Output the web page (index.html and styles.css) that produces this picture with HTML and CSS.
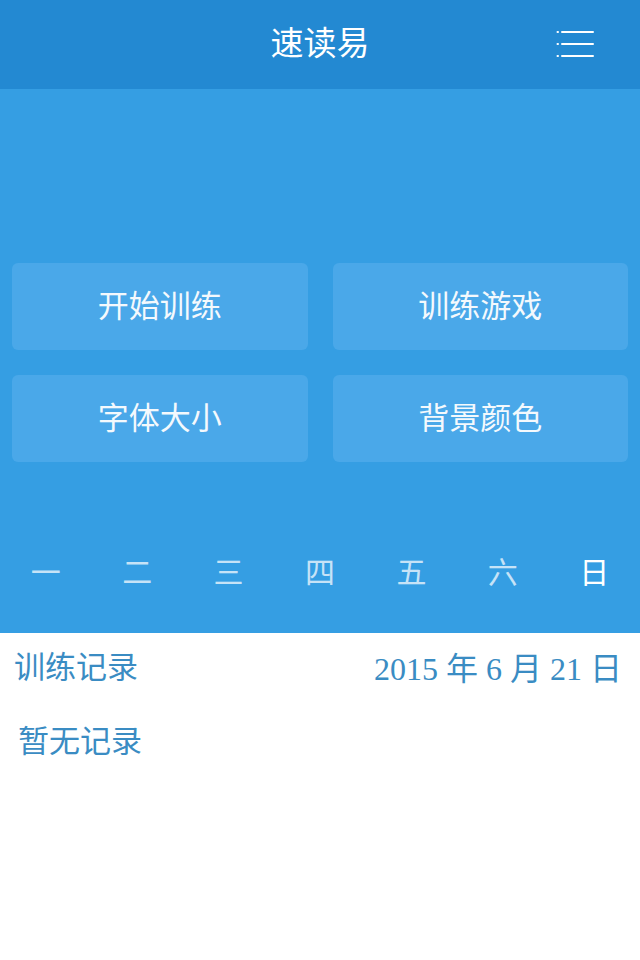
FILE: index.html
```html
<!DOCTYPE html>
<html lang="zh">
<head>
<meta charset="utf-8">
<link rel="stylesheet" href="styles.css">
</head>
<body>
<header class="topbar">
  <h1 class="title">速读易</h1>
  <button class="menu" aria-label="菜单">
    <svg width="40" height="30" viewBox="0 0 40 30">
      <g stroke="#ffffff" stroke-width="2" stroke-linecap="round">
        <line x1="1.5" y1="3" x2="2" y2="3"/>
        <line x1="6" y1="3" x2="37" y2="3"/>
        <line x1="1.5" y1="15" x2="2" y2="15"/>
        <line x1="6" y1="15" x2="37" y2="15"/>
        <line x1="1.5" y1="27" x2="2" y2="27"/>
        <line x1="6" y1="27" x2="37" y2="27"/>
      </g>
    </svg>
  </button>
</header>
<section class="panel">
  <div class="grid">
    <div class="tile">开始训练</div>
    <div class="tile">训练游戏</div>
    <div class="tile">字体大小</div>
    <div class="tile">背景颜色</div>
  </div>
  <ul class="week">
    <li>一</li>
    <li>二</li>
    <li>三</li>
    <li>四</li>
    <li>五</li>
    <li>六</li>
    <li class="today">日</li>
  </ul>
</section>
<section class="records">
  <div class="rec-head">
    <span class="rec-title">训练记录</span>
    <span class="rec-date">2015 年 6 月 21 日</span>
  </div>
  <p class="empty">暂无记录</p>
</section>
</body>
</html>
```
FILE: styles.css
```css
* { box-sizing: border-box; }
html, body {
  margin: 0;
  padding: 0;
  background: #ffffff;
  font-family: "Noto Sans CJK SC", "Noto Sans", sans-serif;
}
.topbar {
  height: 89px;
  background: #2389d2;
  display: flex;
  align-items: center;
  justify-content: center;
  position: relative;
}
.title {
  margin: 0 0 6px 0;
  color: #ffffff;
  font-size: 33px;
  font-weight: 400;
  line-height: 1;
}
.menu {
  position: absolute;
  right: 44px;
  top: 29px;
  width: 40px;
  height: 30px;
  padding: 0;
  border: 0;
  background: none;
  display: block;
}
.menu svg { display: block; }
.panel {
  background: #359ee3;
  height: 544px;
  padding: 174px 12px 0 12px;
}
.grid {
  display: grid;
  grid-template-columns: 1fr 1fr;
  column-gap: 25px;
  row-gap: 25px;
}
.tile {
  height: 87px;
  padding-bottom: 6px;
  background: #4aa8e9;
  border-radius: 6px;
  color: #f4f9fd;
  font-size: 31px;
  display: flex;
  align-items: center;
  justify-content: center;
}
.week {
  list-style: none;
  margin: 86px -12px 0 -12px;
  padding: 0;
  display: grid;
  grid-template-columns: repeat(7, 1fr);
}
.week li {
  text-align: center;
  font-size: 30px;
  line-height: 44px;
  color: rgba(255, 255, 255, 0.72);
}
.week li.today { color: #ffffff; }
.records {
  padding: 0 18px 0 14px;
}
.rec-head {
  display: flex;
  justify-content: space-between;
  align-items: center;
  height: 66px;
}
.rec-title {
  color: #3a8cc3;
  font-size: 31px;
  margin-top: -4px;
}
.rec-date {
  color: #3a8cc3;
  font-family: "Liberation Serif", "Noto Sans CJK SC", serif;
  font-size: 32px;
}
.empty {
  margin: 18px 0 0 4px;
  color: #3a8cc3;
  font-size: 31px;
  line-height: 44px;
}
```
